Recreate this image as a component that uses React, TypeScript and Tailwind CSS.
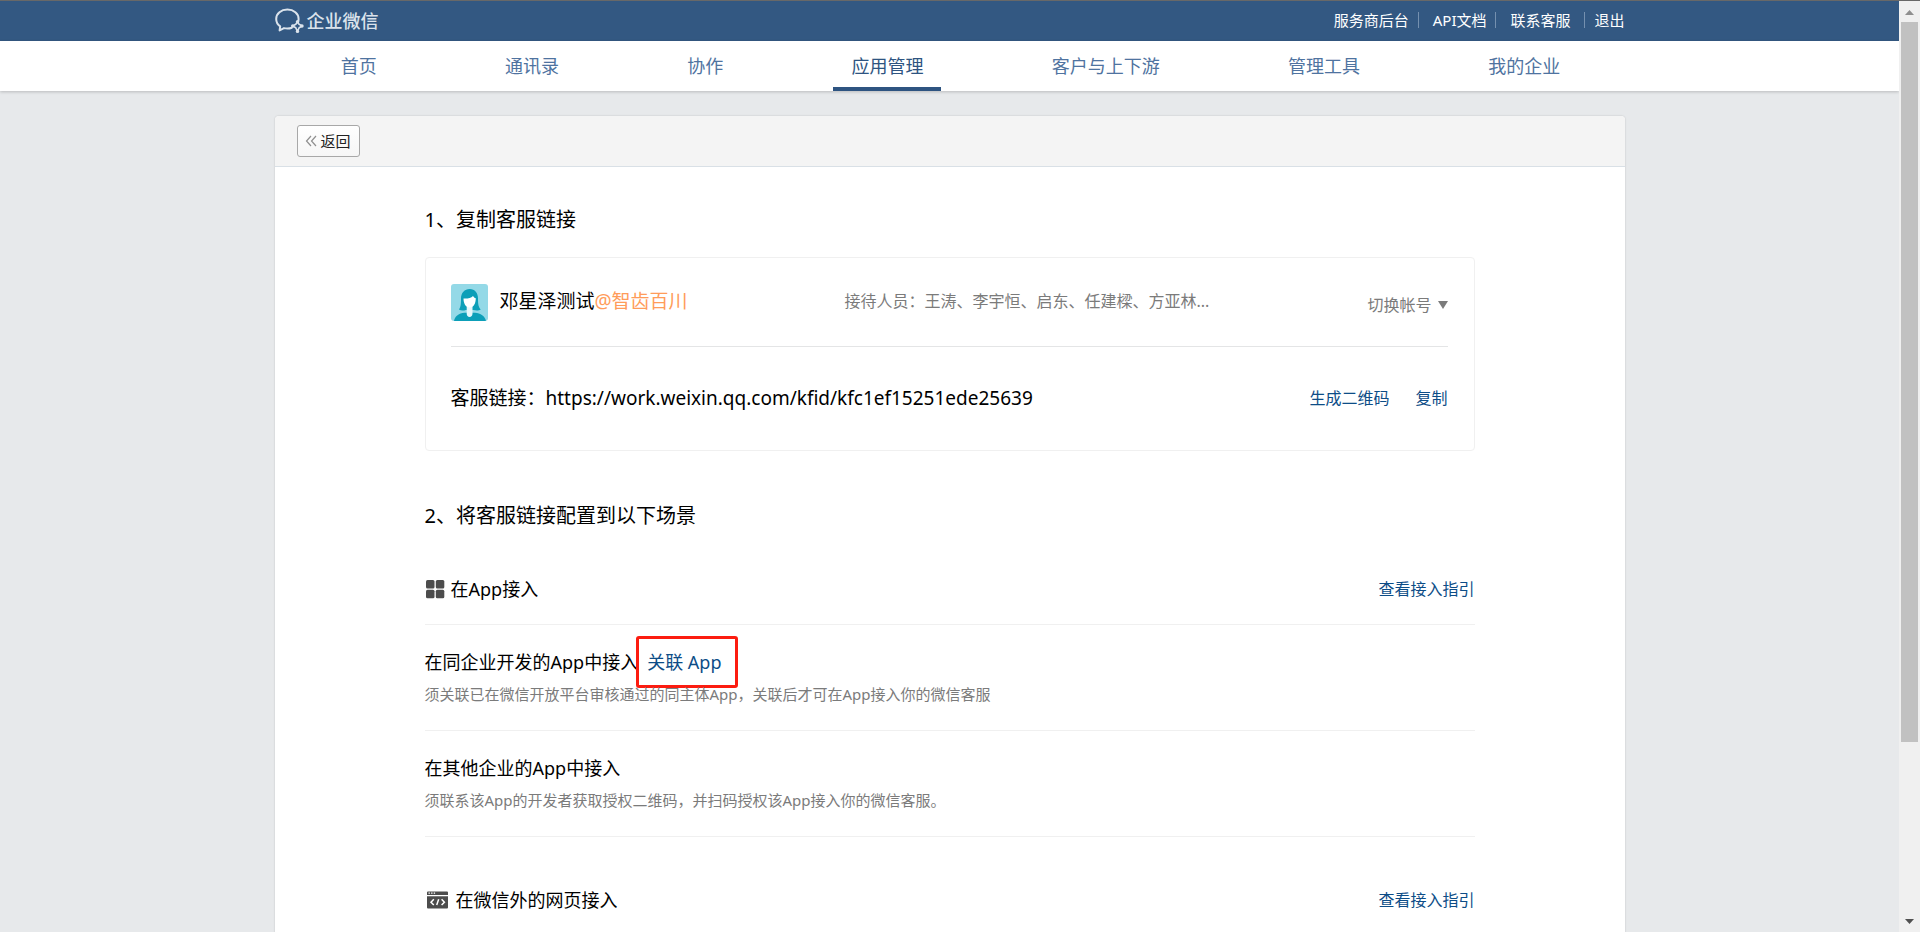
import type { ReactNode } from 'react'
import clsx from 'clsx'

interface NavItem {
  label: string
  active?: boolean
}

const topLinks = ['服务商后台', 'API文档', '联系客服']

const navItems: NavItem[] = [
  { label: '首页' },
  { label: '通讯录' },
  { label: '协作' },
  { label: '应用管理', active: true },
  { label: '客户与上下游' },
  { label: '管理工具' },
  { label: '我的企业' },
]

function LogoIcon() {
  return (
    <svg width="29" height="26" viewBox="0 0 29 26" fill="none" stroke="#dbe3ec" strokeWidth="2">
      <path d="M23 14.2C23.4 13.2 23.6 12.1 23.6 11 23.6 5.6 18.7 1.6 12.4 1.6S1.2 5.6 1.2 11c0 3 1.5 5.600 4 7.400L4.600 22.400l4.400-2.300c2.500.6 5.500.5 7.900-.4" strokeLinecap="round" strokeLinejoin="round" />
      <path d="M22.500 13.600l1.600 2.700 3.100 1.700-3.100 1.800-1.600 3.700-1.700-3.700-3.200-1.800 3.200-1.700z" strokeWidth="1.600" strokeLinejoin="round" />
      <g fill="#dbe3ec" stroke="none">
        <circle cx="22.500" cy="13.700" r="1.700" />
        <circle cx="27" cy="18" r="1.700" />
        <circle cx="22.500" cy="23.400" r="1.700" />
        <circle cx="17.700" cy="18" r="1.700" />
      </g>
    </svg>
  )
}

function Avatar() {
  return (
    <svg width="37" height="37" viewBox="0 0 37 37" className="shrink-0 rounded-[3px]">
      <rect width="37" height="37" fill="#94d9e7" />
      <path d="M8 25.500c1.800-2.500 2-5.500 2-11C10 9 13.500 5 18.700 5s8.300 4 8.300 9.500c0 5.500.4 8.500 2.700 11-1.800 1.300-5 1.200-7 .5h-8c-2.200.8-5 .7-6.700-.5z" fill="#0d9fb8" />
      <path d="M3 37c.8-4.800 5-8 10.500-8.200h10.500C29.500 29 34 32.200 35 37z" fill="#0d9fb8" />
      <path d="M15.700 22h5.800v7.500c0 2-1.200 3.500-2.900 3.500s-2.900-1.500-2.900-3.500z" fill="#e8f7fa" />
      <path d="M12.500 14.500c4 .3 7.500-.5 9.500-2.500.7 1.200 1.600 1.900 2.800 2.200 0 5-2.100 9.300-6.100 9.300s-6.200-4-6.200-9z" fill="#fff" />
    </svg>
  )
}

function GridIcon() {
  return (
    <svg width="20" height="20" viewBox="0 0 20 20" fill="#4c4c4c">
      <rect x="1" y="1" width="8.500" height="8.500" rx="1.500" />
      <rect x="10.800" y="1" width="8.500" height="8.500" rx="1.500" />
      <rect x="1" y="10.800" width="8.500" height="8.500" rx="1.500" />
      <rect x="10.800" y="10.800" width="8.500" height="8.500" rx="1.500" />
    </svg>
  )
}

function CodeWindowIcon() {
  return (
    <svg width="25" height="18" viewBox="0 0 25 18" fill="none">
      <path d="M3 .5h19a1 1 0 0 1 1 1V4H2V1.500a1 1 0 0 1 1-1z" fill="#4c4c4c" />
      <path d="M2 5.200h21V16.500a1 1 0 0 1-1 1H3a1 1 0 0 1-1-1z" fill="#4c4c4c" />
      <path d="M3.500 2.200h1.400M6.100 2.200h1.400M8.700 2.200h1.400" stroke="#fff" strokeWidth="1.200" />
      <path d="M8.800 8.300L6 11.200l2.800 2.900M16.600 8.300l2.800 2.900-2.800 2.900M13.700 8.300l-2 5.800" stroke="#fff" strokeWidth="1.500" />
    </svg>
  )
}

function BackButton() {
  return (
    <button
      type="button"
      className="flex h-8 items-center gap-1 rounded-[3px] border border-[#a8a8a8] bg-gradient-to-b from-white to-[#f6f6f6] pr-2 pl-[7px] text-[15px] text-[#222]"
    >
      <svg width="12" height="12" viewBox="0 0 12 12" fill="none" stroke="#8f8f8f" strokeWidth="1.200">
        <path d="M6 1L1.500 6 6 11M11 1L6.500 6 11 11" />
      </svg>
      返回
    </button>
  )
}

function SectionHeader({ icon, title }: { icon: ReactNode; title: string }) {
  return (
    <div className="flex items-center justify-between">
      <h3 className="flex items-center gap-[6px] text-lg leading-7">
        {icon}
        {title}
      </h3>
      <a href="#" className="text-base leading-6 text-[#0d4d87]">
        查看接入指引
      </a>
    </div>
  )
}

function AccessRow({ title, desc, children }: { title: string; desc: string; children?: ReactNode }) {
  return (
    <div className="border-b border-[#f0f0f0] pt-[23px] pb-6">
      <div className="flex items-center">
        <h4 className="text-lg leading-7">{title}</h4>
        {children}
      </div>
      <p className="mt-[6px] text-[15px] leading-6 text-[#7b7b7b]">{desc}</p>
    </div>
  )
}

function Scrollbar() {
  return (
    <div className="flex w-[21px] shrink-0 flex-col items-center bg-[#f0f0f0]">
      <svg width="17" height="21" viewBox="0 0 17 21" className="shrink-0">
        <path d="M4 14l4.500-5 4.500 5z" fill="#8f8f8f" />
      </svg>
      <div className="min-h-0 w-[17px] flex-1">
        <div className="h-[81%] bg-[#c1c1c1]" />
      </div>
      <svg width="17" height="21" viewBox="0 0 17 21" className="shrink-0">
        <path d="M4 8h9l-4.500 5z" fill="#505050" />
      </svg>
    </div>
  )
}

export default function App() {
  return (
    <div className="flex h-screen flex-col overflow-hidden border-t border-[#686868] bg-[#e7e9eb] font-['Noto_Sans','Noto_Sans_CJK_SC',sans-serif] text-black">
      <div className="flex min-h-0 flex-1">
        <div className="min-w-0 flex-1 overflow-hidden">
          <header className="bg-[#335882]">
            <div className="mx-auto flex h-10 max-w-[1350px] items-center justify-between">
              <a href="#" className="flex items-center gap-[3px] text-lg leading-6 font-medium text-[#dbe3ec]">
                <LogoIcon />
                企业微信
              </a>
              <div className="flex items-center pb-[2px] text-[15px] leading-5 text-white">
                {topLinks.map((label, i) => (
                  <div key={label} className="flex items-center">
                    {i > 0 && <span className="mr-[14px] ml-[9px] h-4 w-px bg-[#7590af]" />}
                    <a href="#">{label}</a>
                  </div>
                ))}
                <a href="#" className="ml-[14px] border-l border-[#7590af] pl-[9px] leading-4">
                  退出
                </a>
              </div>
            </div>
          </header>

          <nav className="relative bg-white shadow-[0_1px_3px_rgba(0,0,0,0.2)]">
            <div className="mx-auto flex h-[50px] max-w-[1350px] justify-around pl-[2px]">
              {navItems.map(({ label, active }) => (
                <a
                  key={label}
                  href="#"
                  className={clsx(
                    'flex items-center border-y-4 border-t-transparent px-[18px] text-lg',
                    active ? 'border-b-[#2e5481] text-[#2e5481]' : 'border-b-transparent text-[#4f73a0]',
                  )}
                >
                  {label}
                </a>
              ))}
            </div>
          </nav>

          <main className="mx-auto mt-[25px] max-w-[1350px] rounded-[4px] bg-white pb-20 shadow-[0_0_2px_rgba(0,0,0,0.2)]">
            <div className="flex h-[51px] items-center rounded-t-[4px] border-b border-[#d9e0e6] bg-[#f4f4f4] px-[22px]">
              <BackButton />
            </div>

            <div className="px-[150px] pt-[39px]">
              <h2 className="text-xl leading-7">1、复制客服链接</h2>
              <section className="mt-[23px] rounded-[4px] border border-[#f0f0f0] pr-[26px] pl-[25px]">
                <div className="flex h-[89px] items-center border-b border-[#e4e5e6]">
                  <div className="flex w-[394px] items-center gap-3 text-[19px] leading-7">
                    <Avatar />
                    <div className="pb-[2px]">
                      邓星泽测试<span className="text-[#ff9c5a]">@智齿百川</span>
                    </div>
                  </div>
                  <p className="flex-1 pb-[2px] text-base leading-6 text-[#7b7b7b]">
                    接待人员：王涛、李宇恒、启东、任建樑、方亚林...
                  </p>
                  <button type="button" className="flex items-center gap-[6px] pt-[6px] text-base leading-6 text-[#7b7b7b]">
                    切换帐号
                    <svg width="10" height="8" viewBox="0 0 10 8" fill="#7b7b7b">
                      <path d="M0 0h10L5 8z" />
                    </svg>
                  </button>
                </div>
                <div className="flex h-[103px] items-center justify-between pb-[2px]">
                  <p className="text-[19px] leading-7">客服链接：https://work.weixin.qq.com/kfid/kfc1ef15251ede25639</p>
                  <div className="flex gap-[26px] text-base leading-6 text-[#0d4d87]">
                    <button type="button">生成二维码</button>
                    <button type="button">复制</button>
                  </div>
                </div>
              </section>

              <h2 className="mt-[51px] text-xl leading-7">2、将客服链接配置到以下场景</h2>
              <section className="mt-[45px]">
                <div className="border-b border-[#f0f0f0] pb-[21px]">
                  <SectionHeader icon={<GridIcon />} title="在App接入" />
                </div>
                <AccessRow
                  title="在同企业开发的App中接入"
                  desc="须关联已在微信开放平台审核通过的同主体App，关联后才可在App接入你的微信客服"
                >
                  <a
                    href="#"
                    className="-my-3 -ml-0.5 rounded-[3px] border-3 border-[#fc1c10] py-[9px] pr-[14px] pl-2 text-lg leading-7 text-[#0d4d87]"
                  >
                    关联 App
                  </a>
                </AccessRow>
                <AccessRow
                  title="在其他企业的App中接入"
                  desc="须联系该App的开发者获取授权二维码，并扫码授权该App接入你的微信客服。"
                />
              </section>

              <section className="mt-[49px]">
                <SectionHeader icon={<CodeWindowIcon />} title="在微信外的网页接入" />
              </section>
            </div>
          </main>
        </div>
        <Scrollbar />
      </div>
    </div>
  )
}
